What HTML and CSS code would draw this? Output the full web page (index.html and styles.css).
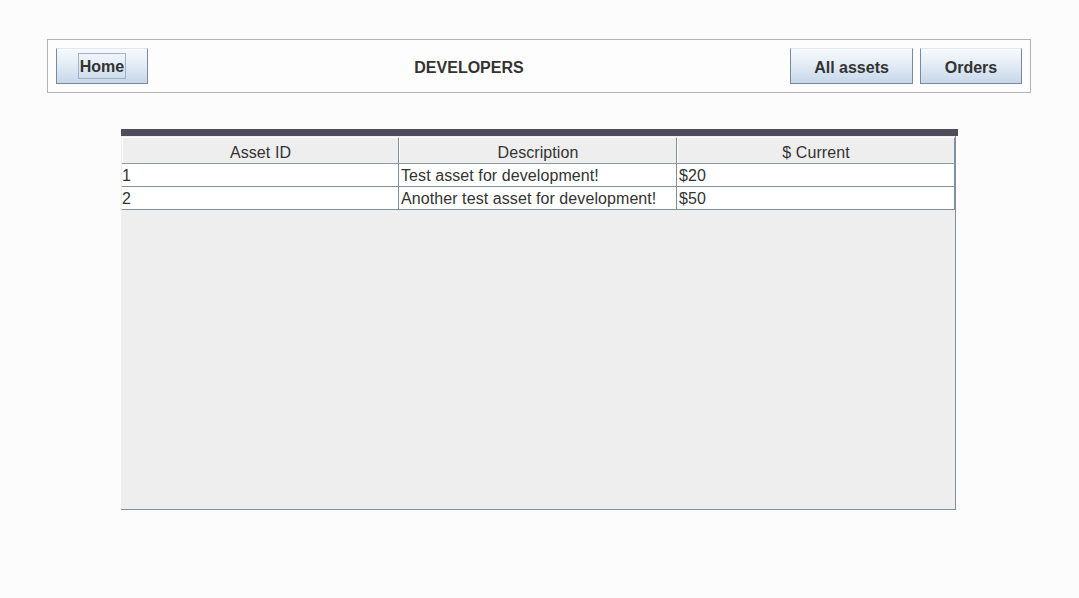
FILE: index.html
```html
<!DOCTYPE html>
<html>
<head>
<meta charset="utf-8">
<link rel="stylesheet" href="styles.css">
</head>
<body>
<div class="toolbar">
  <button class="btn btn-home"><span class="focus">Home</span></button>
  <div class="title">DEVELOPERS</div>
  <button class="btn btn-assets">All assets</button>
  <button class="btn btn-orders">Orders</button>
</div>
<div class="table-wrap">
  <div class="topbar"></div>
  <div class="scroll">
    <div class="row head">
      <div class="cell c1">Asset ID</div>
      <div class="cell c2">Description</div>
      <div class="cell c3">$ Current</div>
    </div>
    <div class="row">
      <div class="cell c1">1</div>
      <div class="cell c2">Test asset for development!</div>
      <div class="cell c3">$20</div>
    </div>
    <div class="row">
      <div class="cell c1">2</div>
      <div class="cell c2">Another test asset for development!</div>
      <div class="cell c3">$50</div>
    </div>
  </div>
</div>
</body>
</html>
```

FILE: styles.css
```css
html, body {
  margin: 0;
  padding: 0;
  background: #fcfcfc;
  font-family: "Liberation Sans", Arial, sans-serif;
  color: #333;
}
.toolbar {
  margin: 39px 0 0 47px;
  width: 984px;
  height: 54px;
  border: 1px solid #b4b4b4;
  background: #fdfdfd;
  display: flex;
  align-items: flex-start;
  padding: 8px 8px 0 8px;
  box-sizing: border-box;
}
.btn {
  height: 36px;
  margin: 0;
  padding: 3px 0 0 0;
  font-family: "Liberation Sans", Arial, sans-serif;
  font-weight: bold;
  font-size: 16px;
  color: #333;
  background: linear-gradient(to bottom, #f6f9fd 0%, #e6eef7 40%, #c6d7e9 100%);
  border: 1px solid #7a8a9b;
  border-top-color: #dfe8f2;
  box-sizing: border-box;
  display: flex;
  align-items: center;
  justify-content: center;
}
.btn-home { width: 92px; }
.btn-assets { width: 123px; margin-right: 7px; }
.btn-orders { width: 102px; }
.focus {
  border: 1px solid #9fb2c6;
  padding: 4px 1px 2px 1px;
  line-height: 18px;
  margin-top: -3px;
}
.title {
  flex: 1;
  text-align: center;
  font-weight: bold;
  font-size: 16px;
  line-height: 36px;
  padding-top: 2px;
  color: #333;
}
.table-wrap {
  margin: 36px 0 0 121px;
  width: 837px;
}
.topbar {
  height: 7px;
  background: #4f4c5c;
}
.scroll {
  width: 835px;
  height: 374px;
  background: #eeeeee;
  border-right: 1px solid #8090a0;
  border-bottom: 1px solid #8090a0;
  box-sizing: border-box;
  padding: 1px 0 0 1px;
}
.row {
  display: flex;
  height: 23px;
  border-bottom: 1px solid #7f8fa0;
  background: #ffffff;
  box-sizing: border-box;
}
.row.head {
  height: 27px;
  background: #eeeeee;
  border-bottom: 1px solid #8a99a8;
}
.cell {
  box-sizing: border-box;
  font-size: 16px;
  line-height: 22px;
  padding-top: 1px;
  padding-left: 0;
  letter-spacing: 0.08px;
  color: #333;
  white-space: nowrap;
  overflow: hidden;
}
.head .cell {
  text-align: center;
  line-height: 28px;
  padding-top: 1px;
  padding-left: 0;
  border-top: 1px solid #ffffff;
  border-left: 1px solid #ffffff;
}
.c1 { width: 277px; border-right: 1px solid #7f8fa0; }
.c2 { width: 278px; border-right: 1px solid #7f8fa0; padding-left: 2px; }
.c3 { width: 278px; border-right: 1px solid #7f8fa0; padding-left: 2px; }
```
